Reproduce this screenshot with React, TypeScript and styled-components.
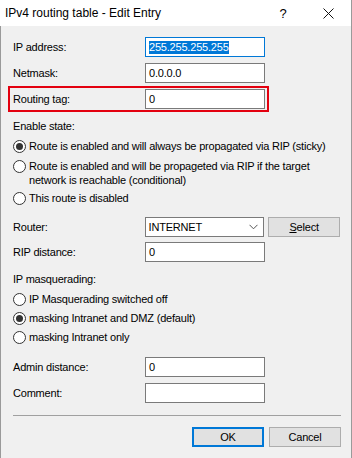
import React from "react";
import styled, { createGlobalStyle } from "styled-components";

const Global = createGlobalStyle`
    html, body {
        margin: 0;
        padding: 0;
        background: #f0f0f0;
    }
    * {
        box-sizing: border-box;
    }
`;

const Window = styled.div`
    width: 352px;
    height: 458px;
    display: flex;
    flex-direction: column;
    background: #f0f0f0;
    border-right: 1px solid #9a9a9a;
    overflow: hidden;
`;

const TitleBar = styled.div`
    height: 26px;
    display: flex;
    align-items: center;
    background: #ffffff;
    font-family: "Liberation Sans", Arial, sans-serif;
    font-size: 12px;
    color: #000;
`;

const Title = styled.div`
    flex: 1;
    padding-left: 5px;
`;

const Help = styled.div`
    width: 44px;
    text-align: center;
    font-size: 13px;
`;

const Close = styled.div`
    width: 46px;
    display: flex;
    justify-content: center;
    align-items: center;
`;

const Body = styled.div`
    flex: 1;
    display: flex;
    flex-direction: column;
    padding: 11px 11px 0 12px;
    border-left: 1px solid #9a9a9a;
    font-family: "Liberation Sans", Arial, sans-serif;
    font-size: 11px;
    letter-spacing: -0.2px;
    color: #000;
`;

const Row = styled.div<{ $mt?: number }>`
    display: flex;
    align-items: center;
    margin-top: ${(p) => p.$mt ?? 0}px;
`;

const Label = styled.div`
    width: 132px;
    line-height: 14px;
`;

const Highlight = styled.div`
    display: flex;
    align-items: center;
    margin: 3px 0 0 -5px;
    padding: 1px 2px 1px 3px;
    width: 261px;
    border: 2px solid #e3000f;
`;

const Input = styled.div`
    width: 120px;
    height: 20px;
    display: flex;
    align-items: center;
    padding-left: 3px;
    background: #fff;
    border: 1px solid #7a7a7a;
    white-space: pre;
`;

const FocusInput = styled(Input)`
    border-color: #0078d7;
`;

const Selected = styled.span`
    background: #0078d7;
    color: #fff;
    line-height: 13px;
`;

const Combo = styled(Input)`
    justify-content: space-between;
    padding-right: 5px;
`;

const Heading = styled.div<{ $mt?: number }>`
    line-height: 14px;
    margin-top: ${(p) => p.$mt ?? 0}px;
`;

const Option = styled.div<{ $mt?: number }>`
    display: flex;
    align-items: flex-start;
    margin-top: ${(p) => p.$mt ?? 0}px;
    line-height: 14px;
`;

const Radio = styled.span<{ $on?: boolean }>`
    flex: none;
    width: 13px;
    height: 13px;
    margin: 1px 3px 0 0;
    border-radius: 50%;
    border: 1px solid #333;
    background: #fff;
    display: flex;
    align-items: center;
    justify-content: center;
    &::after {
        content: "";
        width: 7px;
        height: 7px;
        border-radius: 50%;
        background: ${(p) => (p.$on ? "#333" : "transparent")};
    }
`;

const Button = styled.div<{ $default?: boolean }>`
    width: 72px;
    height: 20px;
    display: flex;
    align-items: center;
    justify-content: center;
    background: #e1e1e1;
    border: ${(p) => (p.$default ? "2px solid #0078d7" : "1px solid #adadad")};
`;

const Separator = styled.div`
    height: 1px;
    margin: 12px 0 0 0;
    width: 328px;
    background: #a0a0a0;
`;

const Buttons = styled.div`
    display: flex;
    justify-content: flex-end;
    gap: 5px;
    margin-top: 11px;
    width: 328px;
`;

const Spacer = styled.div`
    width: 4px;
`;

const Chevron = () => (
    <svg width="9" height="6" viewBox="0 0 9 6">
        <path d="M0.5 0.8 L4.5 4.8 L8.5 0.8" fill="none" stroke="#555" strokeWidth="1" />
    </svg>
);

const CloseIcon = () => (
    <svg width="11" height="11" viewBox="0 0 11 11">
        <path d="M0.5 0.5 L10.5 10.5 M10.5 0.5 L0.5 10.5" stroke="#111" strokeWidth="1" />
    </svg>
);

const App: React.FC = () => {
    return (
        <Window>
            <Global />
            <TitleBar>
                <Title>IPv4 routing table - Edit Entry</Title>
                <Help>?</Help>
                <Close>
                    <CloseIcon />
                </Close>
            </TitleBar>
            <Body>
                <Row>
                    <Label>IP address:</Label>
                    <FocusInput>
                        <Selected>255.255.255.255</Selected>
                    </FocusInput>
                </Row>
                <Row $mt={6}>
                    <Label>Netmask:</Label>
                    <Input>0.0.0.0</Input>
                </Row>
                <Highlight>
                    <Label>Routing tag:</Label>
                    <Input>0</Input>
                </Highlight>

                <Heading $mt={7}>Enable state:</Heading>
                <Option $mt={6}>
                    <Radio $on />
                    Route is enabled and will always be propagated via RIP (sticky)
                </Option>
                <Option $mt={6}>
                    <Radio />
                    <span>
                        Route is enabled and will be propageted via RIP if the target
                        <br />
                        network is reachable (conditional)
                    </span>
                </Option>
                <Option $mt={4}>
                    <Radio />
                    This route is disabled
                </Option>

                <Row $mt={12}>
                    <Label>Router:</Label>
                    <Combo>
                        <span>INTERNET</span>
                        <Chevron />
                    </Combo>
                    <Spacer />
                    <Button>
                        <span>
                            <u>S</u>elect
                        </span>
                    </Button>
                </Row>
                <Row $mt={5}>
                    <Label>RIP distance:</Label>
                    <Input>0</Input>
                </Row>

                <Heading $mt={10}>IP masquerading:</Heading>
                <Option $mt={6}>
                    <Radio />
                    IP Masquerading switched off
                </Option>
                <Option $mt={5}>
                    <Radio $on />
                    masking Intranet and DMZ (default)
                </Option>
                <Option $mt={5}>
                    <Radio />
                    masking Intranet only
                </Option>

                <Row $mt={13}>
                    <Label>Admin distance:</Label>
                    <Input>0</Input>
                </Row>
                <Row $mt={6}>
                    <Label>Comment:</Label>
                    <Input />
                </Row>

                <Separator />
                <Buttons>
                    <Button $default>OK</Button>
                    <Button>Cancel</Button>
                </Buttons>
            </Body>
        </Window>
    );
};

export default App;
